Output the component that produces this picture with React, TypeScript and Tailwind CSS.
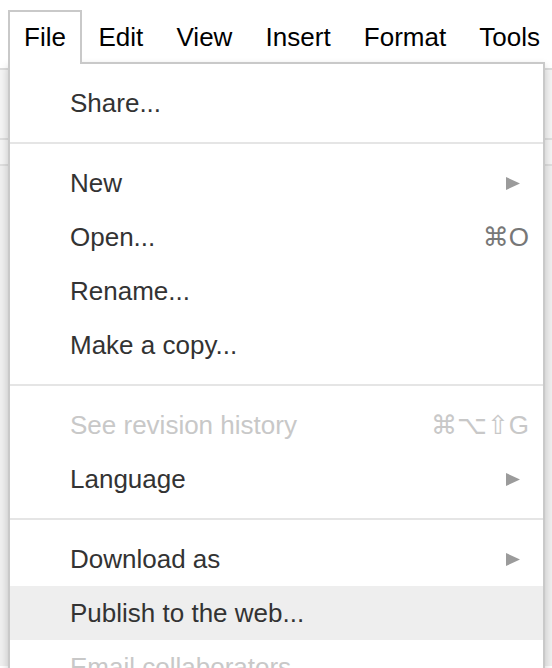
import React from "react";

type Item =
  | { sep: true }
  | {
      sep?: false;
      label: string;
      shortcut?: string;
      submenu?: boolean;
      disabled?: boolean;
      active?: boolean;
    };

const items: Item[] = [
  { label: "Share..." },
  { sep: true },
  { label: "New", submenu: true },
  { label: "Open...", shortcut: "⌘O" },
  { label: "Rename..." },
  { label: "Make a copy..." },
  { sep: true },
  { label: "See revision history", shortcut: "⌘⌥⇧G", disabled: true },
  { label: "Language", submenu: true },
  { sep: true },
  { label: "Download as", submenu: true },
  { label: "Publish to the web...", active: true },
  { label: "Email collaborators", disabled: true },
  { label: "Email as attachment..." },
];

const menus = ["File", "Edit", "View", "Insert", "Format", "Tools"];

function Arrow() {
  return (
    <svg width="14" height="13" viewBox="0 0 14 13" className="mr-[9px]">
      <polygon points="0,0 14,6.5 0,13" fill="#9b9b9b" />
    </svg>
  );
}

export default function App() {
  return (
    <div className="relative h-[668px] w-[552px] overflow-hidden bg-white font-['Liberation_Sans','DejaVu_Sans',sans-serif]">
      {/* menu bar */}
      <div className="flex h-[68px] items-start pl-[8px] pt-[10px] text-[26px] text-black">
        {menus.map((m, i) =>
          i === 0 ? (
            <div
              key={m}
              className="relative z-20 border-2 border-b-0 border-[#c9c9c9] bg-white px-[14px] pt-[5px] pb-[7px] leading-[40px]"
            >
              {m}
            </div>
          ) : (
            <div key={m} className="border-2 border-transparent px-[14.6px] pt-[5px] pb-[7px] leading-[40px]">
              {m}
            </div>
          )
        )}
      </div>

      {/* toolbar behind the menu */}
      <div className="border-t-2 border-[#dcdcdc] bg-[#f4f4f4]">
        <div className="h-[70px] border-b-2 border-[#dedede]" />
        <div className="h-[26px] border-b-2 border-[#dedede]" />
      </div>
      <div className="h-[500px] bg-[#efefef]" />

      {/* File dropdown */}
      <div className="absolute left-[8px] top-[62px] z-10 w-[537px] border-2 border-[#c9c9c9] bg-white pt-[12px] shadow-[0_4px_8px_rgba(0,0,0,0.2)]">
        {items.map((it, i) =>
          it.sep ? (
            <div key={i} className="my-[12px] h-[2px] bg-[#e5e5e5]" />
          ) : (
            <div
              key={i}
              className={`flex h-[54px] items-center justify-between pl-[60px] pr-[14px] text-[26px] leading-[54px] ${
                it.active ? "bg-[#eeeeee]" : ""
              } ${it.disabled ? "text-[#c8c8c8]" : "text-[#333333]"}`}
            >
              <span>{it.label}</span>
              {it.shortcut && (
                <span className={it.disabled ? "text-[#c8c8c8]" : "text-[#777777]"}>{it.shortcut}</span>
              )}
              {it.submenu && <Arrow />}
            </div>
          )
        )}
      </div>
    </div>
  );
}
